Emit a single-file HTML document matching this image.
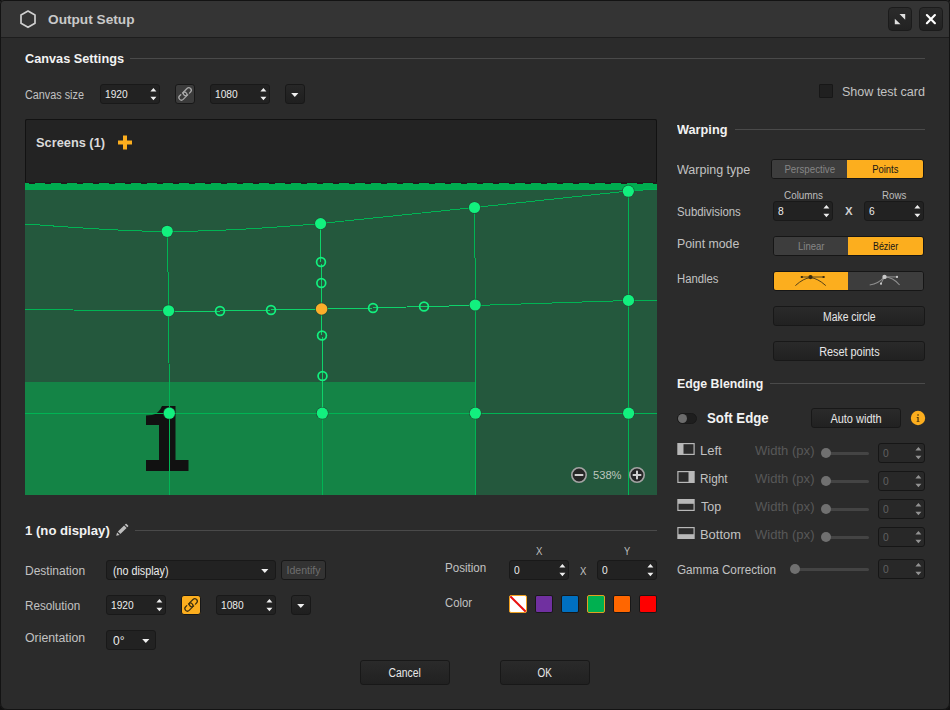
<!DOCTYPE html><html><head>
<meta charset="utf-8">
<title>Output Setup</title>
<style>
html,body{margin:0;padding:0;background:#101010;}
body{width:950px;height:710px;overflow:hidden;position:relative;font-family:"Liberation Sans",sans-serif;font-size:12px;color:#c4c4c4;}
#win{position:absolute;left:0;top:0;width:950px;height:710px;border-radius:4px 4px 7px 7px;background:#2b2b2b;overflow:hidden;}
#frame{position:absolute;left:0;top:0;width:948px;height:708px;border:1px solid #131313;border-radius:4px 4px 7px 7px;z-index:50;pointer-events:none;}
#tbar{position:absolute;left:0;top:0;width:950px;height:37px;background:#343434;border-bottom:1px solid #1d1d1d;}
.abs{position:absolute;white-space:nowrap;}
.lbl{position:absolute;white-space:nowrap;color:#c2c2c2;font-size:12px;line-height:14px;transform-origin:0 50%;}
.hd{position:absolute;white-space:nowrap;color:#f2f2f2;font-weight:bold;font-size:12.5px;line-height:14px;transform-origin:0 50%;}
.hr{position:absolute;height:1px;background:#4a4a4a;}
.tbtn{position:absolute;width:22px;height:22px;border:1px solid #1b1b1b;border-radius:4px;background:linear-gradient(#2b2b2b,#222222);}
.spin{position:absolute;height:18px;border:1px solid #191919;border-radius:3px;background:#222222;color:#ececec;font-size:11.5px;line-height:19px;}
.spin span{position:absolute;left:3.5px;top:0;transform-origin:0 50%;}
.spin .ar{position:absolute;right:0;top:0;fill:#eeeeee;}
.spin.dis{color:#606060;background:#282828;border-color:#161616;}
.spin.dis .ar{fill:#929292;}
.btn{position:absolute;border:1px solid #181818;border-radius:3px;background:linear-gradient(#2a2a2a,#212121);color:#e8e8e8;font-size:12px;text-align:center;}
.btn span{display:inline-block;}
.dd{position:absolute;width:18px;height:18px;border:1px solid #181818;border-radius:3px;background:linear-gradient(#272727,#1f1f1f);}
.da{position:absolute;top:0;fill:#f0f0f0;}
.combo{position:absolute;height:18px;border:1px solid #191919;border-radius:3px;background:#222222;color:#ececec;font-size:12px;line-height:20px;}
.combo span{position:absolute;left:6px;top:0;transform-origin:0 50%;}
.tog{position:absolute;height:17px;border:1px solid #161616;border-radius:3px;overflow:hidden;background:#3c3c3c;}
.tog div{position:absolute;top:0;height:17px;line-height:17px;text-align:center;font-size:11px;}
.tog div span{display:inline-block;}
.tog .off{background:#3d3d3d;color:#868686;}
.tog .on{background:#fcae1e;color:#161616;}
.sw{position:absolute;width:16px;height:16px;border:1px solid #181818;border-radius:2px;}
.trk{position:absolute;height:3px;border-radius:2px;background:#444444;}
.knb{position:absolute;width:10px;height:10px;border-radius:5px;background:#707070;}
.dim{color:#585858 !important;}
.sm{position:absolute;white-space:nowrap;font-size:10px;line-height:12px;color:#bebebe;transform-origin:0 50%;}
</style>
</head>
<body>
<div id="win">
<div id="tbar"></div>
<!-- title -->
<svg class="abs" style="left:17px;top:8px" width="22" height="22" viewBox="0 0 22 22"><path d="M11 3.1 L18 7.1 L18 15.3 L11 19.3 L4 15.3 L4 7.1 Z" fill="none" stroke="#cfcfcf" stroke-width="1.7" stroke-linejoin="round"></path></svg>
<div class="abs" style="left: 48px; top: 12px; font-weight: bold; font-size: 13px; line-height: 15px; color: rgb(201, 201, 201); transform-origin: 0px 50%; transform: scaleX(1.051);">Output Setup</div>
<div class="tbtn" style="left:888px;top:7px"><svg width="22" height="22" viewBox="0 0 22 22" style="position:absolute;left:0;top:0"><path d="M10.5 5.9 H16.2 V11.8 Z M5.8 10.7 V16.2 H11.5 Z" fill="#e0e0e0"></path></svg></div>
<div class="tbtn" style="left:919px;top:7px"><svg width="22" height="22" viewBox="0 0 22 22" style="position:absolute;left:0;top:0"><path d="M6.9 7.1 L14.9 15.2 M14.9 7.1 L6.9 15.2" stroke="#ffffff" stroke-width="2.2" stroke-linecap="round"></path></svg></div>

<!-- canvas settings -->
<div class="hd" style="left: 25px; top: 52px; transform: scaleX(1.018);">Canvas Settings</div>
<div class="hr" style="left:130px;top:58px;width:795px"></div>
<div class="lbl" style="left: 25px; top: 88px; transform: scaleX(0.902);">Canvas size</div>
<div class="spin" style="left:100px;top:84px;width:58px"><span style="transform: scaleX(0.887);">1920</span><svg class="ar" width="12" height="18" viewBox="0 0 12 18"><path d="M3.4 6.4 L6.4 2.9 L9.4 6.4 Z M3.4 11.7 L6.4 15.2 L9.4 11.7 Z"></path></svg></div>
<div class="btn" id="lnk1" style="left:175px;top:84px;width:18px;height:18px;background:#3b3b3b"><svg width="20" height="20" viewBox="0 0 20 20" style="position:absolute;left:-1px;top:-1px"><g transform="translate(10.1 9.9) rotate(-45)" fill="none" stroke="#a8a8a8" stroke-width="1.3" stroke-linecap="round"><path d="M3.60 2.5 L5.20 2.5 A2.5 2.5 0 0 0 5.20 -2.5 L1.00 -2.5 A2.5 2.5 0 0 0 1.00 2.5 L1.20 2.5"></path><path d="M-3.60 -2.5 L-5.20 -2.5 A2.5 2.5 0 0 0 -5.20 2.5 L-1.00 2.5 A2.5 2.5 0 0 0 -1.00 -2.5 L-1.20 -2.5"></path></g></svg></div>
<div class="spin" style="left:210px;top:84px;width:58px"><span style="transform: scaleX(0.887);">1080</span><svg class="ar" width="12" height="18" viewBox="0 0 12 18"><path d="M3.4 6.4 L6.4 2.9 L9.4 6.4 Z M3.4 11.7 L6.4 15.2 L9.4 11.7 Z"></path></svg></div>
<div class="dd" style="left:285px;top:84px"><svg class="da" style="left:4.95px" width="8" height="18" viewBox="0 0 8 18"><path d="M0.2 7.9 H7.4 L3.8 12 Z"></path></svg></div>
<div class="abs" style="left:819px;top:84px;width:12px;height:12px;border:1px solid #171717;background:#202020;border-radius:1px"></div>
<div class="lbl" style="left: 841.5px; top: 84.5px; font-size: 12.5px; transform: scaleX(1.004);">Show test card</div>

<!-- SCREENS PANEL -->
<div id="panel" class="abs" style="left:25px;top:119px;width:632px;height:376px;background:#232323;overflow:hidden">
<!--PANEL_S-->
<svg width="632" height="376" viewBox="25 119 632 376" style="position:absolute;left:0;top:0">
<rect x="25" y="119" width="632" height="376" fill="#232323"></rect>
<rect x="25.5" y="119.5" width="631" height="375" rx="1.5" fill="none" stroke="#121212"></rect>
<!-- green canvas -->
<rect x="25" y="183" width="632" height="312" fill="#24583d"></rect>
<rect x="25" y="183" width="632" height="7" fill="#00ac50"></rect>
<rect x="25" y="182" width="632" height="1" fill="#1e1a1c"></rect>
<path d="M29 183.5 H657" stroke="#1e1a1c" stroke-width="1" stroke-dasharray="6 10" fill="none" shape-rendering="crispEdges"></path>
<rect x="25" y="382" width="450" height="113" fill="#148446"></rect>
<!-- big 1 -->
<path d="M162 406 H175.5 V460 H188.5 V471 H146 V460 H159 V425 H146 V415.5 L152 415 Q159 413.5 162 406 Z" fill="#111111"></path>
<!-- grid -->
<g fill="none" stroke="#00b454" stroke-width="1" shape-rendering="crispEdges">
<path d="M25 224 C70 227 120 231.5 167 231.5 C215 231.5 270 228 320.5 223.5 L474.5 207.5 L628.5 191 L657 189"></path>
<path d="M25 309.5 L168.5 311"></path>
<path d="M475 305.5 L628.5 300.5 L657 300.5"></path>
<path d="M25 413.5 H657"></path>
<path d="M167.5 231 L168.5 311 L169.5 413 V495"></path>
<path d="M322.5 413 V495"></path>
<path d="M474.5 207.5 L475.5 305 V495"></path>
<path d="M628.5 191 V495"></path>
</g>
<!-- handle lines -->
<g fill="none" stroke="#0ed26a" stroke-width="1" shape-rendering="crispEdges">
<path d="M168.5 311 L220 311 L271 310 L321.5 309 L373 308 L424 306.5 L475 305.5"></path>
<path d="M320.5 223.5 L321 262 L321.5 309 L322 335 L322.5 376 V413"></path>
</g>
<!-- hollow handles -->
<g fill="none" stroke="#12f07e" stroke-width="1.7">
<circle cx="220" cy="311" r="4.4"></circle><circle cx="271" cy="310" r="4.4"></circle>
<circle cx="373" cy="308" r="4.4"></circle><circle cx="424" cy="306.5" r="4.4"></circle>
<circle cx="321" cy="262" r="4.4"></circle><circle cx="321.3" cy="283" r="4.4"></circle>
<circle cx="322" cy="335.5" r="4.4"></circle><circle cx="322.5" cy="376" r="4.4"></circle>
</g>
<!-- points -->
<g fill="#12f07e" stroke="#1f4e36" stroke-width="1.2" paint-order="stroke">
<circle cx="167.2" cy="231.3" r="5.6"></circle><circle cx="320.6" cy="223.6" r="5.6"></circle><circle cx="474.5" cy="207.5" r="5.6"></circle><circle cx="628.3" cy="191.2" r="5.6"></circle>
<circle cx="168.6" cy="310.8" r="5.6"></circle><circle cx="475.2" cy="305" r="5.6"></circle><circle cx="628.5" cy="300.4" r="5.6"></circle>
<circle cx="169.3" cy="413.2" r="5.6"></circle><circle cx="322.3" cy="413.2" r="5.6"></circle><circle cx="475.4" cy="413.2" r="5.6"></circle><circle cx="628.6" cy="413.2" r="5.6"></circle>
</g>
<circle cx="321.6" cy="309" r="5.8" fill="#fcae2a" stroke="#1f4e36" stroke-width="1.2" paint-order="stroke"></circle>
<!-- zoom -->
<g>
<circle cx="579" cy="475" r="7.2" fill="#262626" stroke="#a4a4a4" stroke-width="1.6"></circle>
<rect x="574.7" y="474" width="8.6" height="2" fill="#cfcfcf"></rect>
<circle cx="637" cy="475" r="7.2" fill="#262626" stroke="#a4a4a4" stroke-width="1.6"></circle>
<rect x="632.7" y="474" width="8.6" height="2" fill="#cfcfcf"></rect>
<rect x="636" y="470.7" width="2" height="8.6" fill="#cfcfcf"></rect>
</g>
<!-- plus icon -->
<path d="M123 135.5 h4 v5 h5 v4 h-5 v5 h-4 v-5 h-5 v-4 h5 z" fill="#fcae1e"></path>
</svg>
<div class="abs" style="left: 11px; top: 17px; font-weight: bold; font-size: 12.5px; line-height: 14px; color: rgb(218, 218, 218); transform-origin: 0px 50%; transform: scaleX(1.024);">Screens (1)</div>
<div class="abs" style="left: 568px; top: 349px; font-size: 11.5px; line-height: 14px; color: rgb(191, 199, 191); transform-origin: 0px 50%; transform: scaleX(0.969);">538%</div>
<!--PANEL_E-->
</div>
<!-- bottom-left: screen settings -->
<div class="hd" style="left: 25px; top: 523.5px; transform: scaleX(1.052);">1 (no display)</div>
<svg class="abs" style="left:114px;top:522px" width="16" height="16" viewBox="0 0 16 16"><path d="M2.2 13.8 L3.1 10.4 L5.6 12.9 Z" fill="#bdbdbd"></path><path d="M3.9 9.6 L10.1 3.4 L12.6 5.9 L6.4 12.1 Z" fill="#bdbdbd"></path><path d="M10.8 2.7 L11.6 1.9 Q12.1 1.4 12.6 1.9 L14.1 3.4 Q14.6 3.9 14.1 4.4 L13.3 5.2 Z" fill="#bdbdbd"></path></svg>
<div class="hr" style="left:135px;top:530px;width:522px"></div>

<div class="lbl" style="left: 25px; top: 564px; transform: scaleX(1.001);">Destination</div>
<div class="combo" style="left:106px;top:560px;width:168px"><span style="transform: scaleX(0.895);">(no display)</span><svg class="da" style="left:154.4px" width="8" height="18" viewBox="0 0 8 18"><path d="M0.2 7.9 H7.4 L3.8 12 Z"></path></svg></div>
<div class="btn" style="left:281px;top:560px;width:43px;height:18px;line-height:18px;background:#333333;color:#6e6e6e;font-size:11.5px"><span style="transform: scaleX(0.917);">Identify</span></div>

<div class="lbl" style="left: 25px; top: 598.5px; transform: scaleX(0.972);">Resolution</div>
<div class="spin" style="left:106px;top:595px;width:58px"><span style="transform: scaleX(0.887);">1920</span><svg class="ar" width="12" height="18" viewBox="0 0 12 18"><path d="M3.4 6.4 L6.4 2.9 L9.4 6.4 Z M3.4 11.7 L6.4 15.2 L9.4 11.7 Z"></path></svg></div>
<div class="btn" id="lnk2" style="left:181px;top:595px;width:18px;height:18px;background:#fcae1e"><svg width="20" height="20" viewBox="0 0 20 20" style="position:absolute;left:-1px;top:-1px"><g transform="translate(10.1 9.9) rotate(-45)" fill="none" stroke="#3f300f" stroke-width="1.25" stroke-linecap="round"><path d="M3.60 2.5 L5.20 2.5 A2.5 2.5 0 0 0 5.20 -2.5 L1.00 -2.5 A2.5 2.5 0 0 0 1.00 2.5 L1.20 2.5"></path><path d="M-3.60 -2.5 L-5.20 -2.5 A2.5 2.5 0 0 0 -5.20 2.5 L-1.00 2.5 A2.5 2.5 0 0 0 -1.00 -2.5 L-1.20 -2.5"></path></g></svg></div>
<div class="spin" style="left:216px;top:595px;width:58px"><span style="transform: scaleX(0.887);">1080</span><svg class="ar" width="12" height="18" viewBox="0 0 12 18"><path d="M3.4 6.4 L6.4 2.9 L9.4 6.4 Z M3.4 11.7 L6.4 15.2 L9.4 11.7 Z"></path></svg></div>
<div class="dd" style="left:291px;top:595px"><svg class="da" style="left:4.95px" width="8" height="18" viewBox="0 0 8 18"><path d="M0.2 7.9 H7.4 L3.8 12 Z"></path></svg></div>

<div class="lbl" style="left: 25px; top: 631px; transform: scaleX(1.024);">Orientation</div>
<div class="combo" style="left:106px;top:630px;width:48px"><span style="transform: scaleX(1.001);">0°</span><svg class="da" style="left:34.5px" width="8" height="18" viewBox="0 0 8 18"><path d="M0.2 7.9 H7.4 L3.8 12 Z"></path></svg></div>

<div class="lbl" style="left: 445px; top: 561px; transform: scaleX(0.965);">Position</div>
<div class="sm" style="left: 535.8px; top: 546px; transform: scaleX(0.959);">X</div>
<div class="sm" style="left: 623.8px; top: 546px; transform: scaleX(0.929);">Y</div>
<div class="spin" style="left:509px;top:560px;width:58px"><span style="transform: scaleX(0.89);">0</span><svg class="ar" width="12" height="18" viewBox="0 0 12 18"><path d="M3.4 6.4 L6.4 2.9 L9.4 6.4 Z M3.4 11.7 L6.4 15.2 L9.4 11.7 Z"></path></svg></div>
<div class="lbl" style="left: 579.5px; top: 564px; font-size: 11px; color: rgb(196, 196, 196); transform: scaleX(0.871);">X</div>
<div class="spin" style="left:597px;top:560px;width:58px"><span style="transform: scaleX(0.89);">0</span><svg class="ar" width="12" height="18" viewBox="0 0 12 18"><path d="M3.4 6.4 L6.4 2.9 L9.4 6.4 Z M3.4 11.7 L6.4 15.2 L9.4 11.7 Z"></path></svg></div>

<div class="lbl" style="left: 445px; top: 596px; transform: scaleX(0.938);">Color</div>
<div class="sw" style="left:509px;top:595px;background:#ffffff;border-color:#f0a020;overflow:hidden"><svg width="16" height="16" style="position:absolute;left:0;top:0"><path d="M0 0 L16 16" stroke="#e81010" stroke-width="2"></path></svg></div>
<div class="sw" style="left:535px;top:595px;background:#7030a0"></div>
<div class="sw" style="left:561px;top:595px;background:#0070c0"></div>
<div class="sw" style="left:587px;top:595px;background:#00b050;border-color:#e0a020"></div>
<div class="sw" style="left:613px;top:595px;background:#ff6600"></div>
<div class="sw" style="left:639px;top:595px;background:#ff0000"></div>

<div class="btn" style="left:360px;top:660px;width:88px;height:23px;line-height:25px"><span style="transform: scaleX(0.862);">Cancel</span></div>
<div class="btn" style="left:500px;top:660px;width:88px;height:23px;line-height:25px"><span style="transform: scaleX(0.825);">OK</span></div>
<!-- right: warping -->
<div class="hd" style="left: 677.4px; top: 123px; transform: scaleX(1.018);">Warping</div>
<div class="hr" style="left:735px;top:129px;width:190px"></div>
<div class="lbl" style="left: 677.4px; top: 162.5px; transform: scaleX(1.043);">Warping type</div>
<div class="tog" style="left:771px;top:159px;width:151px;height:18px"><div class="off" style="left:0;width:75px;height:18px;line-height:19px"><span style="transform: scaleX(0.882);">Perspective</span></div><div class="on" style="left:75px;width:76px;height:18px;line-height:19px"><span style="transform: scaleX(0.857);">Points</span></div></div>

<div class="lbl" style="left: 677.4px; top: 205px; transform: scaleX(0.947);">Subdivisions</div>
<div class="sm" style="left: 784.2px; top: 190px; transform: scaleX(0.988);">Columns</div>
<div class="sm" style="left: 881.9px; top: 190px; transform: scaleX(0.975);">Rows</div>
<div class="spin" style="left:773px;top:201px;width:58px"><span style="transform: scaleX(0.89);">8</span><svg class="ar" width="12" height="18" viewBox="0 0 12 18"><path d="M3.4 6.4 L6.4 2.9 L9.4 6.4 Z M3.4 11.7 L6.4 15.2 L9.4 11.7 Z"></path></svg></div>
<div class="abs" style="left: 845.2px; top: 204px; font-weight: bold; font-size: 11px; line-height: 14px; color: rgb(208, 208, 208); transform-origin: 0px 50%; transform: scaleX(1.035);">X</div>
<div class="spin" style="left:864px;top:201px;width:58px"><span style="transform: scaleX(0.89);">6</span><svg class="ar" width="12" height="18" viewBox="0 0 12 18"><path d="M3.4 6.4 L6.4 2.9 L9.4 6.4 Z M3.4 11.7 L6.4 15.2 L9.4 11.7 Z"></path></svg></div>

<div class="lbl" style="left: 677.4px; top: 236.5px; transform: scaleX(1.026);">Point mode</div>
<div class="tog" style="left:773px;top:236px;width:149px;height:18px"><div class="off" style="left:0;width:74px;height:18px;line-height:19px"><span style="transform: scaleX(0.867);">Linear</span></div><div class="on" style="left:74px;width:75px;height:18px;line-height:19px"><span style="transform: scaleX(0.811);">Bézier</span></div></div>

<div class="lbl" style="left: 677.4px; top: 271.5px; transform: scaleX(0.943);">Handles</div>
<div class="tog" style="left:773px;top:271px;width:149px;height:18px"><div class="on" style="left:0;width:74px;height:18px"></div><div class="off" style="left:74px;width:75px;height:18px"></div>
<svg width="150" height="18" viewBox="774 272 150 18" style="position:absolute;left:0;top:0">
<path d="M795.4 285.6 Q803.5 278.2 810.5 277.6 Q817.5 278.2 825.8 285.6" fill="none" stroke="#4a3a18" stroke-width="0.95"></path>
<path d="M801.8 277 H823.4" stroke="#4a3a18" stroke-width="0.9"></path>
<rect x="800.8" y="276" width="2" height="2" fill="#3a2c10"></rect><rect x="822.6" y="276" width="2" height="2" fill="#3a2c10"></rect>
<circle cx="810.5" cy="277.1" r="2.1" fill="#3a2c10"></circle>
<path d="M869.7 285 Q878.5 283.8 884.5 276.9" fill="none" stroke="#8e8e8e" stroke-width="1.1"></path>
<path d="M884.5 276.9 Q893 277.2 899.6 285" fill="none" stroke="#8e8e8e" stroke-width="1.1"></path>
<path d="M884.5 276.9 H897 M884.5 276.9 L881 283.6" stroke="#8e8e8e" stroke-width="1"></path>
<rect x="896" y="275.9" width="2" height="2" fill="#c4c4c4"></rect><rect x="880" y="282.6" width="2" height="2" fill="#c4c4c4"></rect>
<circle cx="884.5" cy="276.9" r="2.2" fill="#c8c8c8"></circle>
</svg>
</div>

<div class="btn" style="left:773px;top:306px;width:150px;height:18px;line-height:20px"><span style="transform: scaleX(0.865);">Make circle</span></div>
<div class="btn" style="left:773px;top:341px;width:150px;height:18px;line-height:20px"><span style="transform: scaleX(0.906);">Reset points</span></div>

<!-- edge blending -->
<div class="hd" style="left: 677.4px; top: 376.5px; transform: scaleX(0.987);">Edge Blending</div>
<div class="hr" style="left:770px;top:383px;width:155px"></div>
<div class="abs" style="left:677px;top:413px;border-radius:6px;background:#1e1e1e;border:1px solid #191919;box-sizing:border-box;width:20px;height:11px"></div>
<div class="abs" style="left:678px;top:414px;width:9px;height:9px;border-radius:5px;background:#6c6c6c"></div>
<div class="abs" style="left: 706.7px; top: 410px; font-weight: bold; font-size: 14px; line-height: 16px; color: rgb(242, 242, 242); transform-origin: 0px 50%; transform: scaleX(0.944);">Soft Edge</div>
<div class="btn" style="left:811px;top:408px;width:88px;height:18px;line-height:20px"><span style="transform: scaleX(0.915);">Auto width</span></div>
<svg class="abs" style="left:910px;top:410px" width="16" height="16" viewBox="0 0 16 16"><circle cx="8" cy="8" r="7.2" fill="#fcae1e"></circle><path d="M6.7 6.9 H8.6 V11 H9.4 V11.8 H6.7 V11 H7.5 V7.7 H6.7 Z" fill="#3a2a08"></path><rect x="7.4" y="4.3" width="1.3" height="1.4" fill="#3a2a08"></rect></svg>

<!-- edge rows -->
<svg class="abs" style="left:677px;top:443px" width="18" height="100" viewBox="677 443 18 100">
<g fill="none" stroke="#b8b8b8" stroke-width="1.2">
<rect x="677.9" y="443.6" width="16.2" height="10.8"></rect><rect x="677.9" y="471.6" width="16.2" height="10.8"></rect><rect x="677.9" y="499.6" width="16.2" height="10.8"></rect><rect x="677.9" y="527.6" width="16.2" height="10.8"></rect>
</g>
<g fill="#b8b8b8">
<rect x="678" y="444" width="5.5" height="10"></rect><rect x="688.5" y="472" width="5.5" height="10"></rect><rect x="678" y="500" width="16" height="3.8"></rect><rect x="678" y="534.2" width="16" height="4"></rect>
</g>
</svg>
<div class="lbl" style="left: 700.3px; top: 444px; transform: scaleX(1.084);">Left</div>
<div class="lbl" style="left: 700.3px; top: 472px; transform: scaleX(0.982);">Right</div>
<div class="lbl" style="left: 701.2px; top: 500px; transform: scaleX(1.043);">Top</div>
<div class="lbl" style="left: 700.3px; top: 528px; transform: scaleX(1.076);">Bottom</div>
<div class="lbl dim" style="left: 755.2px; top: 444px; transform: scaleX(1.088);">Width (px)</div>
<div class="lbl dim" style="left: 755.2px; top: 472px; transform: scaleX(1.088);">Width (px)</div>
<div class="lbl dim" style="left: 755.2px; top: 500px; transform: scaleX(1.088);">Width (px)</div>
<div class="lbl dim" style="left: 755.2px; top: 528px; transform: scaleX(1.088);">Width (px)</div>
<div class="trk" style="left:826px;top:451.5px;width:43px"></div><div class="knb" style="left:821px;top:448px"></div>
<div class="trk" style="left:826px;top:479.5px;width:43px"></div><div class="knb" style="left:821px;top:476px"></div>
<div class="trk" style="left:826px;top:507.5px;width:43px"></div><div class="knb" style="left:821px;top:504px"></div>
<div class="trk" style="left:826px;top:535.5px;width:43px"></div><div class="knb" style="left:821px;top:532px"></div>
<div class="spin dis" style="left:878px;top:443px;width:45px"><span style="transform: scaleX(0.89);">0</span><svg class="ar" width="12" height="18" viewBox="0 0 12 18"><path d="M3.4 6.4 L6.4 2.9 L9.4 6.4 Z M3.4 11.7 L6.4 15.2 L9.4 11.7 Z"></path></svg></div>
<div class="spin dis" style="left:878px;top:471px;width:45px"><span style="transform: scaleX(0.89);">0</span><svg class="ar" width="12" height="18" viewBox="0 0 12 18"><path d="M3.4 6.4 L6.4 2.9 L9.4 6.4 Z M3.4 11.7 L6.4 15.2 L9.4 11.7 Z"></path></svg></div>
<div class="spin dis" style="left:878px;top:499px;width:45px"><span style="transform: scaleX(0.89);">0</span><svg class="ar" width="12" height="18" viewBox="0 0 12 18"><path d="M3.4 6.4 L6.4 2.9 L9.4 6.4 Z M3.4 11.7 L6.4 15.2 L9.4 11.7 Z"></path></svg></div>
<div class="spin dis" style="left:878px;top:527px;width:45px"><span style="transform: scaleX(0.89);">0</span><svg class="ar" width="12" height="18" viewBox="0 0 12 18"><path d="M3.4 6.4 L6.4 2.9 L9.4 6.4 Z M3.4 11.7 L6.4 15.2 L9.4 11.7 Z"></path></svg></div>

<div class="lbl" style="left: 677.4px; top: 563px; transform: scaleX(0.976);">Gamma Correction</div>
<div class="trk" style="left:795px;top:567.5px;width:74px"></div><div class="knb" style="left:790px;top:564px"></div>
<div class="spin dis" style="left:878px;top:559px;width:45px"><span style="transform: scaleX(0.89);">0</span><svg class="ar" width="12" height="18" viewBox="0 0 12 18"><path d="M3.4 6.4 L6.4 2.9 L9.4 6.4 Z M3.4 11.7 L6.4 15.2 L9.4 11.7 Z"></path></svg></div>
</div>
<div id="frame"></div>


</body></html>
